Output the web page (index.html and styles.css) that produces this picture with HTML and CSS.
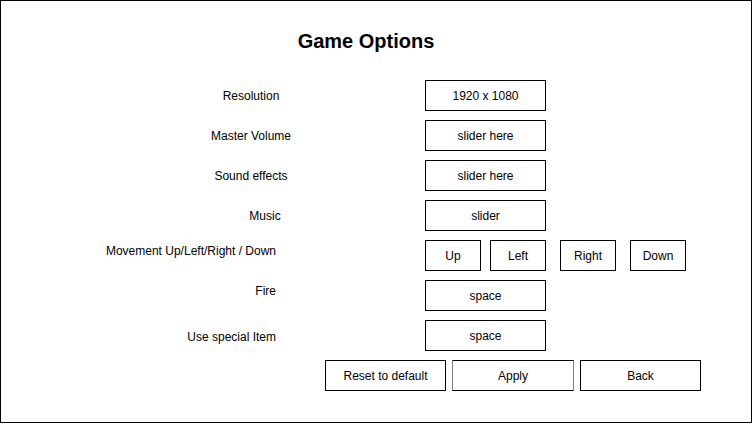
FILE: index.html
```html
<!DOCTYPE html>
<html lang="en">
<head>
  <meta charset="UTF-8">
  <title>Game Options</title>
  <link rel="stylesheet" href="styles.css">
</head>
<body>
  <div class="frame">
    <h1 class="title">Game Options</h1>

    <div class="row">
      <div class="label">Resolution</div>
      <div class="box">1920 x 1080</div>
    </div>

    <div class="row">
      <div class="label">Master Volume</div>
      <div class="box">slider here</div>
    </div>

    <div class="row">
      <div class="label">Sound effects</div>
      <div class="box">slider here</div>
    </div>

    <div class="row">
      <div class="label label--music">Music</div>
      <div class="box">slider</div>
    </div>

    <div class="row">
      <div class="label label--right label--top">Movement Up/Left/Right / Down</div>
      <div class="keys">
        <div class="box box--key">Up</div>
        <div class="box box--key">Left</div>
        <div class="box box--key">Right</div>
        <div class="box box--key">Down</div>
      </div>
    </div>

    <div class="row">
      <div class="label label--right label--top">Fire</div>
      <div class="box">space</div>
    </div>

    <div class="row">
      <div class="label label--right label--item">Use special Item</div>
      <div class="box">space</div>
    </div>

    <div class="actions">
      <div class="box">Reset to default</div>
      <div class="box box--apply">Apply</div>
      <div class="box">Back</div>
    </div>
  </div>
</body>
</html>
```

FILE: styles.css
```css
body {
  margin: 0;
  font-family: 'Liberation Sans', Arial, sans-serif;
  color: #000;
  background: #fff;
}

.frame {
  box-sizing: border-box;
  width: 752px;
  height: 423px;
  border: 1px solid #000;
  padding-top: 28px;
}

.title {
  margin: 0 0 27px;
  font-size: 20px;
  line-height: 24px;
  font-weight: bold;
  text-align: center;
  padding-right: 20px;
}

.row {
  display: flex;
  height: 31px;
  margin-bottom: 9px;
}

.label {
  box-sizing: border-box;
  width: 424px;
  padding-left: 76px;
  display: flex;
  align-items: center;
  justify-content: center;
  font-size: 12px;
  line-height: 14px;
}

.label--music {
  padding-left: 104px;
}

.label--right {
  padding-left: 0;
  padding-right: 149px;
  justify-content: flex-end;
}

.label--top {
  align-items: flex-start;
  padding-top: 4px;
}

.label--item {
  padding-top: 2px;
}

.box {
  box-sizing: border-box;
  width: 121px;
  height: 31px;
  border: 1px solid #000;
  display: flex;
  align-items: center;
  justify-content: center;
  font-size: 12px;
}

.keys {
  display: flex;
}

.box--key {
  width: 56px;
  margin-right: 14px;
}

.box--key:first-child {
  margin-right: 9px;
}

.actions {
  display: flex;
  gap: 6px;
  padding-left: 324px;
}

.box--apply {
  width: 122px;
  border-left-color: #808080;
  border-right-color: #808080;
}
```
